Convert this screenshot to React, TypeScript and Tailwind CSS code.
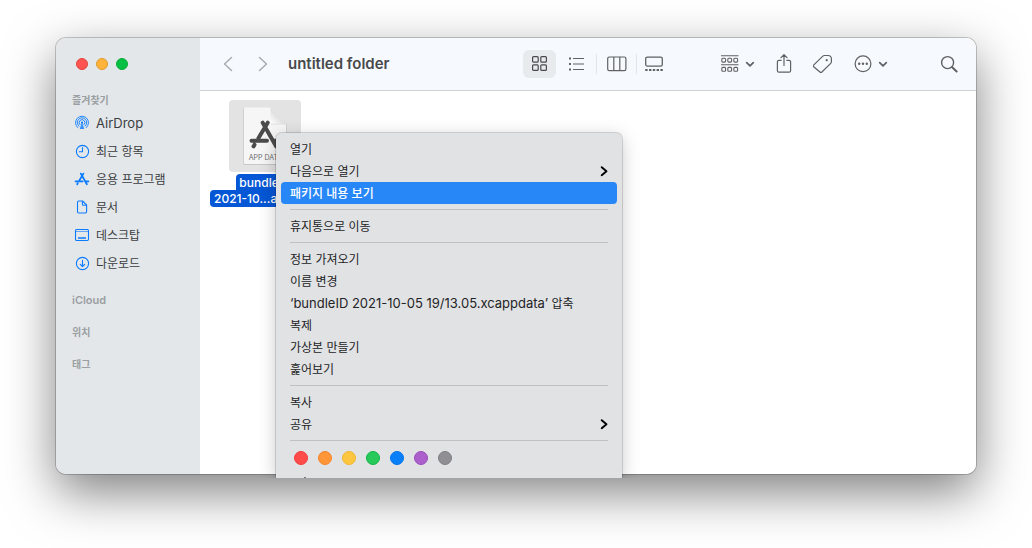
import type { ReactNode } from "react";

function AirDropIcon() {
  return (
    <svg className="size-4" viewBox="0 0 16 16" fill="none" stroke="currentColor" strokeWidth=".9" strokeLinecap="round">
      <path d="M3.700 12.600A6.500 6.500 0 1 1 12.300 12.600" />
      <path d="M4.900 11.100A4.700 4.700 0 1 1 11.100 11.100" />
      <path d="M6 9.700A2.900 2.900 0 1 1 10 9.700" />
      <path d="M8 7.600 10.300 14H5.700z" fill="currentColor" stroke="none" opacity=".8" />
      <circle cx="8" cy="7.700" r="1.100" fill="currentColor" stroke="none" />
    </svg>
  );
}

function ClockIcon() {
  return (
    <svg className="size-4" viewBox="0 0 16 16" fill="none" stroke="currentColor" strokeWidth="1.1" strokeLinecap="round">
      <circle cx="8.500" cy="8.500" r="6.100" />
      <path d="M8.500 4.600v4.100H5.300" />
    </svg>
  );
}

function AppsIcon() {
  return (
    <svg className="size-4" viewBox="0 0 16 16" fill="none" stroke="currentColor" strokeWidth="1.8" strokeLinecap="round">
      <path d="M9.400 2.600 5.400 9.400M3.200 13.200l.5-.9M6.800 2.600l6.100 10.600M1.600 10.400h7M12.400 10.400h2" />
    </svg>
  );
}

function DocumentIcon() {
  return (
    <svg className="size-4" viewBox="0 0 16 16" fill="none" stroke="currentColor" strokeWidth="1.1" strokeLinejoin="round">
      <path d="M3.500 3.200a1.200 1.200 0 0 1 1.200-1.200h3.900l4 4v6.800a1.200 1.200 0 0 1-1.200 1.200H4.700a1.200 1.200 0 0 1-1.200-1.200z" />
      <path d="M8.400 2.200v3.100a1 1 0 0 0 1 1h3.100" />
    </svg>
  );
}

function DesktopIcon() {
  return (
    <svg className="size-4" viewBox="0 0 16 16" fill="none" stroke="currentColor">
      <rect x="1.500" y="2.500" width="13" height="11" rx="1.200" strokeWidth="1.1" />
      <path d="M1.500 4.500h13" strokeWidth="1" opacity=".6" />
      <path d="M4 11h8" strokeWidth="1.6" />
    </svg>
  );
}

function DownloadIcon() {
  return (
    <svg className="size-4" viewBox="0 0 16 16" fill="none" stroke="currentColor" strokeWidth="1.1" strokeLinecap="round" strokeLinejoin="round">
      <circle cx="8.500" cy="8.500" r="6.100" />
      <path d="M8.500 5.400v6M6.300 9.300l2.200 2.200 2.200-2.200" />
    </svg>
  );
}

const places: { label: string; icon: ReactNode; latin?: boolean }[] = [
  { label: "AirDrop", icon: <AirDropIcon />, latin: true },
  { label: "최근 항목", icon: <ClockIcon /> },
  { label: "응용 프로그램", icon: <AppsIcon /> },
  { label: "문서", icon: <DocumentIcon /> },
  { label: "데스크탑", icon: <DesktopIcon /> },
  { label: "다운로드", icon: <DownloadIcon /> },
];

function Sidebar() {
  return (
    <aside className="w-36 shrink-0 bg-[#e3e7ea]">
      <div className="mb-px flex h-[52px] items-center gap-2 pl-5">
        <button aria-label="닫기" className="size-3 rounded-full border border-[#e2463f] bg-[#ff5450]" />
        <button aria-label="최소화" className="size-3 rounded-full border border-[#e09b2d] bg-[#ffb33a]" />
        <button aria-label="확대" className="size-3 rounded-full border border-[#0cab38] bg-[#05c042]" />
      </div>
      <h2 className="flex h-[18px] items-center pl-4 text-[10px] font-bold text-[#9b9fa2]">즐겨찾기</h2>
      <nav>
        {places.map((p) => (
          <a key={p.label} href="#" className="flex h-7 items-center gap-1.5 pl-[18px] text-[#3b3d40]">
            <span className="text-[#0a7aff]">{p.icon}</span>
            <span className={p.latin ? "pt-0.5 text-[13px]" : "pt-0.5 text-xs"}>{p.label}</span>
          </a>
        ))}
      </nav>
      <div className="pt-[7px] text-[#9b9fa2]">
        <h2 className="flex h-8 items-center pl-4 text-[11px] font-semibold">iCloud</h2>
        <h2 className="flex h-8 items-center pl-4 text-[10px] font-bold">위치</h2>
        <h2 className="flex h-8 items-center pl-4 text-[10px] font-bold">태그</h2>
      </div>
    </aside>
  );
}

function SmallChevron() {
  return (
    <svg className="h-3 w-2.5" viewBox="0 0 10 12" fill="none" stroke="currentColor" strokeWidth="1.7" strokeLinecap="round" strokeLinejoin="round">
      <path d="M1.700 4.700 5 7.900 8.300 4.700" />
    </svg>
  );
}

function Toolbar() {
  return (
    <header className="flex h-[53px] items-center border-b border-[#cfd2d4] bg-[#f6fafe] pr-[18px] pl-5 text-[#5f6163]">
      <div className="flex gap-[19px] text-[#a9acaf]">
        <button aria-label="뒤로">
          <svg className="size-4" viewBox="0 0 16 16" fill="none" stroke="currentColor" strokeWidth="1.5" strokeLinecap="round" strokeLinejoin="round">
            <path d="M11.500 1.500 4.500 8l7 6.500" />
          </svg>
        </button>
        <button aria-label="앞으로">
          <svg className="size-4" viewBox="0 0 16 16" fill="none" stroke="currentColor" strokeWidth="1.5" strokeLinecap="round" strokeLinejoin="round">
            <path d="M4.500 1.500 11.500 8l-7 6.500" />
          </svg>
        </button>
      </div>
      <h1 className="ml-[17px] text-[15px] font-semibold whitespace-nowrap text-[#48494b]">untitled folder</h1>

      <div className="mr-[49px] ml-auto flex items-center">
        <button aria-label="아이콘 보기" className="flex h-7 w-[33px] items-center justify-center rounded-md bg-[#e7ebed] text-[#48494b]">
          <svg className="size-4" viewBox="0 0 16 16" fill="none" stroke="currentColor" strokeWidth="1.2">
            <rect x=".6" y=".6" width="5.600" height="5.600" rx="1" />
            <rect x="8.800" y=".6" width="5.600" height="5.600" rx="1" />
            <rect x=".6" y="8.800" width="5.600" height="5.600" rx="1" />
            <rect x="8.800" y="8.800" width="5.600" height="5.600" rx="1" />
          </svg>
        </button>
        <button aria-label="목록 보기" className="flex h-5 w-10 items-center justify-center">
          <svg className="size-4" viewBox="0 0 16 16" fill="none" stroke="currentColor">
            <path d="M5 2.500h11M5 8h11M5 13.500h11" strokeWidth="1.1" />
            <path d="M1 2.500h2M1 8h2M1 13.500h2" strokeWidth="2" />
          </svg>
        </button>
        <button aria-label="계층 보기" className="flex h-5 w-10 items-center justify-center border-l border-[#e1e5e8]">
          <svg className="h-4 w-5" viewBox="0 0 20 16" fill="none" stroke="currentColor" strokeWidth="1.2">
            <rect x=".7" y="1" width="18.200" height="13.600" rx="1.600" />
            <path d="M6.800 1v13.600M12.800 1v13.600" />
          </svg>
        </button>
        <button aria-label="갤러리 보기" className="flex h-5 w-9 items-center border-l border-[#e1e5e8] pl-2">
          <svg className="h-4 w-[18px]" viewBox="0 0 18 16" fill="none" stroke="currentColor">
            <rect x=".7" y="1.100" width="16.600" height="9" rx="1.600" strokeWidth="1.3" />
            <path d="M.2 14h18" strokeWidth="2.200" strokeDasharray="2.400 1.400" />
          </svg>
        </button>
      </div>

      <div className="flex items-center gap-[21px]">
        <button aria-label="그룹화" className="flex items-center gap-1.5">
          <svg className="size-[18px]" viewBox="0 0 18 18" fill="none" stroke="currentColor" strokeWidth="1.1">
            <path d="M0 .8h17.500M0 9.700h17.500" />
            <rect x=".8" y="3.300" width="3.800" height="3.800" rx="1" />
            <rect x="6.800" y="3.300" width="3.800" height="3.800" rx="1" />
            <rect x="12.800" y="3.300" width="3.800" height="3.800" rx="1" />
            <rect x=".8" y="12.400" width="3.800" height="3.800" rx="1" />
            <rect x="6.800" y="12.400" width="3.800" height="3.800" rx="1" />
            <rect x="12.800" y="12.400" width="3.800" height="3.800" rx="1" />
          </svg>
          <SmallChevron />
        </button>
        <button aria-label="공유">
          <svg className="h-5 w-4" viewBox="0 0 16 20" fill="none" stroke="currentColor" strokeWidth="1.2" strokeLinecap="round" strokeLinejoin="round">
            <path d="M5.200 6.300H2.900A1.500 1.500 0 0 0 1.400 7.800v8.900a1.500 1.500 0 0 0 1.500 1.500h10.200a1.500 1.500 0 0 0 1.500-1.500V7.800a1.500 1.500 0 0 0-1.500-1.500h-2.300" />
            <path d="M8 11.500V.9M5 3.600 8 .6l3 3" />
          </svg>
        </button>
        <button aria-label="태그 편집">
          <svg className="size-5" viewBox="0 0 20 20" fill="none" stroke="currentColor" strokeWidth="1.2" strokeLinejoin="round">
            <path d="M.6 11.100 9.800 2.100q.7-.6 1.600-.6h3.600q3.300 0 3.400 3.200v3.100q0 .9-.7 1.600L8.900 18q-1 .9-2 0L.7 12.800q-.9-.9-.1-1.700z" />
            <circle cx="13.700" cy="6.200" r="1.100" fill="currentColor" stroke="none" />
          </svg>
        </button>
        <button aria-label="동작" className="flex items-center gap-1.5">
          <svg className="size-[18px]" viewBox="0 0 18 18" fill="none" stroke="currentColor" strokeWidth="1.2">
            <circle cx="9" cy="8.800" r="7.900" />
            <g fill="currentColor" stroke="none">
              <circle cx="5.200" cy="8.800" r="1.200" />
              <circle cx="9" cy="8.800" r="1.200" />
              <circle cx="12.800" cy="8.800" r="1.200" />
            </g>
          </svg>
          <SmallChevron />
        </button>
      </div>
      <button aria-label="검색" className="ml-[52px]">
        <svg className="size-[18px]" viewBox="0 0 18 18" fill="none" stroke="currentColor" strokeLinecap="round">
          <circle cx="7.600" cy="7.600" r="6" strokeWidth="1.400" />
          <path d="m12.200 12.200 4.400 4.300" strokeWidth="2" />
        </svg>
      </button>
    </header>
  );
}

function FileItem() {
  return (
    <figure className="flex w-[110px] flex-col items-center">
      <div className="flex size-[72px] items-center justify-center rounded bg-[#e3e3e3]">
        <svg className="size-16" viewBox="0 0 64 64">
          <defs>
            <linearGradient id="fold" x1="0" y1="1" x2="1" y2="0">
              <stop offset="0" stopColor="#ffffff" />
              <stop offset=".5" stopColor="#dedede" />
              <stop offset=".52" stopColor="#e3e3e3" />
            </linearGradient>
            <linearGradient id="flap" x1="0" y1="1" x2=".6" y2=".4">
              <stop offset="0" stopColor="#ffffff" />
              <stop offset="1" stopColor="#d6d6d6" />
            </linearGradient>
          </defs>
          <path d="M10.500 4.500h27l16 15.500V60.700H10.500z" fill="#000" opacity=".16" />
          <path d="M11 4.500a1 1 0 0 1 1-1h25.500L53 19.500v39.500a1 1 0 0 1-1 1H12a1 1 0 0 1-1-1z" fill="#f6f6f6" />
          <path d="M37.500 3.500 53 19.500H38.500a1 1 0 0 1-1-1z" fill="url(#flap)" />
          <path d="M37.500 19.500H53v1.200H38.500z" fill="#000" opacity=".07" />
          <path d="M34.700 18.700 25.500 34M21.500 40.700l-1 1.700M29.700 18.700l13.500 23.700M18.500 36.700h15.500M40.500 36.700h6" fill="none" stroke="#4b4b4b" strokeWidth="4" strokeLinecap="round" />
          <text x="32.500" y="55.500" textAnchor="middle" fontSize="7" fill="#6b6b6b">APP DATA</text>
        </svg>
      </div>
      <figcaption className="mt-0.5 flex flex-col items-center text-xs font-medium whitespace-nowrap text-white">
        <span className="flex h-4 items-center rounded-t bg-[#0557d6] px-[3px] pt-0.5">bundleID</span>
        <span className="flex h-[17px] w-[110px] items-center rounded bg-[#0557d6] px-1">2021-10...a</span>
      </figcaption>
    </figure>
  );
}

function MenuItem({ children, active, submenu }: { children: ReactNode; active?: boolean; submenu?: boolean }) {
  return (
    <button
      role="menuitem"
      className={
        "flex h-[22px] w-full shrink-0 items-center justify-between rounded pr-2 pl-[9px] text-left text-xs whitespace-nowrap " +
        (active ? "bg-[#2787f7] font-medium text-white" : "text-[#232426]")
      }
    >
      <span className="pt-0.5">{children}</span>
      {submenu && (
        <svg className="h-3 w-2.5 text-black" viewBox="0 0 10 12" fill="none" stroke="currentColor" strokeWidth="1.900" strokeLinecap="round" strokeLinejoin="round">
          <path d="M2.700 2.200 7.500 6.200l-4.800 4" />
        </svg>
      )}
    </button>
  );
}

function Separator() {
  return <hr className="mx-[9px] my-[5px] shrink-0 border-[#bfc1c3]" />;
}

function ContextMenu() {
  return (
    <div
      role="menu"
      className="absolute top-[95px] left-[220px] flex h-[345px] w-[346px] flex-col overflow-hidden rounded-t-md bg-[#e1e2e4] px-[5px] pt-[5px] shadow-[0_0_0_1px_rgba(0,0,0,0.14),0_4px_18px_rgba(0,0,0,0.22)] [clip-path:inset(-30px_-30px_0_-30px)]"
    >
      <MenuItem>열기</MenuItem>
      <MenuItem submenu>다음으로 열기</MenuItem>
      <MenuItem active>패키지 내용 보기</MenuItem>
      <Separator />
      <MenuItem>휴지통으로 이동</MenuItem>
      <Separator />
      <MenuItem>정보 가져오기</MenuItem>
      <MenuItem>이름 변경</MenuItem>
      <MenuItem>
        <span className="text-[13px]">‘bundleID 2021-10-05 19/13.05.xcappdata’</span> 압축
      </MenuItem>
      <MenuItem>복제</MenuItem>
      <MenuItem>가상본 만들기</MenuItem>
      <MenuItem>훑어보기</MenuItem>
      <Separator />
      <MenuItem>복사</MenuItem>
      <MenuItem submenu>공유</MenuItem>
      <Separator />
      <div className="flex h-6 shrink-0 items-center gap-2.5 pl-[13px]">
        <button aria-label="빨간색" className="size-3.5 rounded-full border border-[#f53b3a] bg-[#fe4c4a]" />
        <button aria-label="주황색" className="size-3.5 rounded-full border border-[#f5852a] bg-[#ff9638]" />
        <button aria-label="노란색" className="size-3.5 rounded-full border border-[#f3b52c] bg-[#fdc641]" />
        <button aria-label="초록색" className="size-3.5 rounded-full border border-[#10b644] bg-[#27c95a]" />
        <button aria-label="파란색" className="size-3.5 rounded-full border border-[#0073ee] bg-[#0a80f8]" />
        <button aria-label="보라색" className="size-3.5 rounded-full border border-[#9a4cbd] bg-[#ab60cb]" />
        <button aria-label="회색" className="size-3.5 rounded-full border border-[#7f7f83] bg-[#909094]" />
      </div>
      <svg className="mt-[7px] ml-[22px] h-px w-1 shrink-0" viewBox="0 0 4 1" aria-hidden="true">
        <path d="M1 0h2v1H1z" fill="#77797b" />
      </svg>
    </div>
  );
}

export default function App() {
  return (
    <div className="min-h-screen bg-white px-14 pt-[38px] pb-[74px] font-['Inter','Noto_Sans_CJK_KR',sans-serif]">
      <div className="relative">
        <div className="flex min-h-[436px] overflow-hidden rounded-[10px] shadow-[0_0_0_1px_rgba(0,0,0,0.2),0_18px_50px_rgba(0,0,0,0.5)]">
          <Sidebar />
          <main className="flex min-w-0 flex-1 flex-col bg-white">
            <Toolbar />
            <section className="flex-1 pt-[9px] pl-2.5">
              <FileItem />
            </section>
          </main>
        </div>
        <ContextMenu />
      </div>
    </div>
  );
}
